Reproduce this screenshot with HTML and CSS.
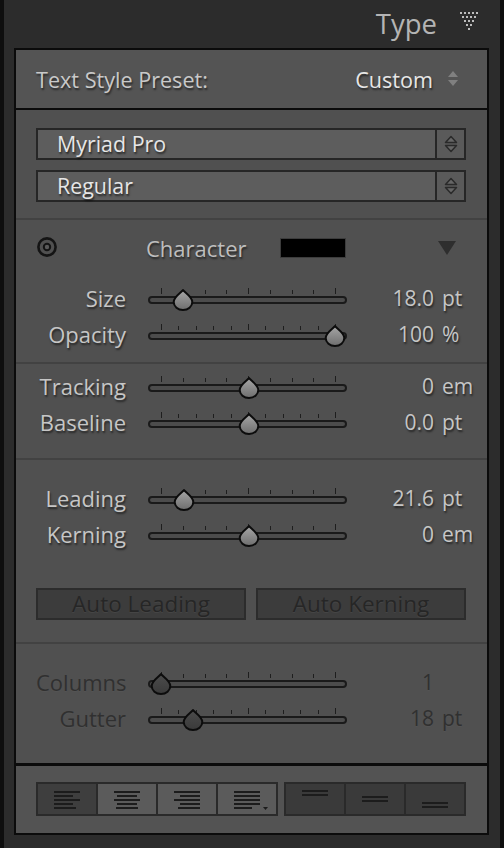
FILE: index.html
```html
<!DOCTYPE html>
<html lang="en">
<head>
    <meta charset="UTF-8">
    <title>Type</title>
    <link rel="stylesheet" href="styles.css">
</head>
<body>
    <svg width="0" height="0" class="defs">
        <defs>
            <linearGradient id="thumbFill" x1="0" y1="0" x2="0" y2="1">
                <stop offset="0" stop-color="#a6a6a6"/>
                <stop offset="1" stop-color="#6e6e6e"/>
            </linearGradient>
            <linearGradient id="thumbOff" x1="0" y1="0" x2="0" y2="1">
                <stop offset="0" stop-color="#4c4c4c"/>
                <stop offset="1" stop-color="#3a3a3a"/>
            </linearGradient>
            <path id="drop" d="M11 1.2 C13 3.6 20.3 8 20.3 13 A9.3 8 0 0 1 1.7 13 C1.7 8 9 3.6 11 1.2 Z"/>
        </defs>
    </svg>

    <div class="frame">
        <div class="head">
            <span class="head-title">Type</span>
            <svg class="head-icon" width="18" height="19" viewBox="0 0 18 19">
                <g fill="#bdbdbd">
                    <rect x="0" y="0" width="2" height="2"/><rect x="4" y="0" width="2" height="2"/><rect x="8" y="0" width="2" height="2"/><rect x="12" y="0" width="2" height="2"/><rect x="16" y="0" width="2" height="2"/>
                    <rect x="2" y="4" width="2" height="2"/><rect x="6" y="4" width="2" height="2"/><rect x="10" y="4" width="2" height="2"/><rect x="14" y="4" width="2" height="2"/>
                    <rect x="4" y="8" width="2" height="2"/><rect x="8" y="8" width="2" height="2"/><rect x="12" y="8" width="2" height="2"/>
                    <rect x="6" y="12" width="2" height="2"/><rect x="10" y="12" width="2" height="2"/>
                    <rect x="8" y="16" width="2" height="2"/>
                </g>
            </svg>
        </div>

        <div class="panel">
            <div class="sec preset">
                <span class="preset-label">Text Style Preset:</span>
                <span class="preset-value">Custom</span>
                <svg class="updown" width="10" height="16" viewBox="0 0 10 16">
                    <path d="M5 0 L10 6 L0 6 Z M0 9 L10 9 L5 15 Z" fill="#808080"/>
                </svg>
            </div>

            <div class="sec fonts">
                <div class="select">
                    <span class="select-text">Myriad Pro</span>
                    <span class="select-btn">
                        <svg width="14" height="18" viewBox="0 0 14 18">
                            <path d="M7 1.5 L12.5 7.5 L1.5 7.5 Z M1.5 10.5 L12.5 10.5 L7 16.5 Z" fill="#666" stroke="#2a2a2a" stroke-width="1.5" stroke-linejoin="round"/>
                        </svg>
                    </span>
                </div>
                <div class="select">
                    <span class="select-text">Regular</span>
                    <span class="select-btn">
                        <svg width="14" height="18" viewBox="0 0 14 18">
                            <path d="M7 1.5 L12.5 7.5 L1.5 7.5 Z M1.5 10.5 L12.5 10.5 L7 16.5 Z" fill="#666" stroke="#2a2a2a" stroke-width="1.5" stroke-linejoin="round"/>
                        </svg>
                    </span>
                </div>
            </div>

            <div class="sec character">
                <div class="char-head">
                    <svg class="target" width="22" height="22" viewBox="0 0 22 22">
                        <circle cx="11" cy="11" r="8.6" fill="none" stroke="#141414" stroke-width="2.6"/>
                        <circle cx="11" cy="11" r="3.2" fill="#5a5a5a" stroke="#141414" stroke-width="2"/>
                    </svg>
                    <span class="char-title">Character</span>
                    <span class="swatch"></span>
                    <svg class="collapse" width="20" height="16" viewBox="0 0 20 16">
                        <path d="M1 1 L19 1 L10 15 Z" fill="#2e2e2e"/>
                    </svg>
                </div>

                <div class="row first">
                    <span class="label">Size</span>
                    <div class="slider">
                        <div class="ticks"><i class="major"></i><i></i><i></i><i></i><i class="major"></i><i></i><i></i><i></i><i class="major"></i></div>
                        <div class="track"></div>
                        <svg class="thumb" style="left: 24px" width="22" height="22" viewBox="0 0 22 22"><use href="#drop" fill="url(#thumbFill)" stroke="#0c0c0c" stroke-width="2"/></svg>
                    </div>
                    <span class="num">18.0</span><span class="unit">pt</span>
                </div>
                <div class="row">
                    <span class="label">Opacity</span>
                    <div class="slider">
                        <div class="ticks"><i class="major"></i><i></i><i></i><i></i><i></i><i class="major"></i><i></i><i></i><i></i><i></i><i class="major"></i></div>
                        <div class="track"></div>
                        <svg class="thumb" style="left: 176px" width="22" height="22" viewBox="0 0 22 22"><use href="#drop" fill="url(#thumbFill)" stroke="#0c0c0c" stroke-width="2"/></svg>
                    </div>
                    <span class="num">100</span><span class="unit">%</span>
                </div>
            </div>

            <div class="sec spacing">
                <div class="row">
                    <span class="label">Tracking</span>
                    <div class="slider">
                        <div class="ticks"><i class="major"></i><i></i><i></i><i></i><i class="major"></i><i></i><i></i><i></i><i class="major"></i></div>
                        <div class="track"></div>
                        <svg class="thumb" style="left: 90px" width="22" height="22" viewBox="0 0 22 22"><use href="#drop" fill="url(#thumbFill)" stroke="#0c0c0c" stroke-width="2"/></svg>
                    </div>
                    <span class="num">0</span><span class="unit">em</span>
                </div>
                <div class="row">
                    <span class="label">Baseline</span>
                    <div class="slider">
                        <div class="ticks"><i class="major"></i><i></i><i></i><i></i><i></i><i class="major"></i><i></i><i></i><i></i><i></i><i class="major"></i></div>
                        <div class="track"></div>
                        <svg class="thumb" style="left: 90px" width="22" height="22" viewBox="0 0 22 22"><use href="#drop" fill="url(#thumbFill)" stroke="#0c0c0c" stroke-width="2"/></svg>
                    </div>
                    <span class="num">0.0</span><span class="unit">pt</span>
                </div>
            </div>

            <div class="sec leading">
                <div class="row">
                    <span class="label">Leading</span>
                    <div class="slider">
                        <div class="ticks"><i class="major"></i><i></i><i></i><i></i><i class="major"></i><i></i><i></i><i></i><i class="major"></i></div>
                        <div class="track"></div>
                        <svg class="thumb" style="left: 25px" width="22" height="22" viewBox="0 0 22 22"><use href="#drop" fill="url(#thumbFill)" stroke="#0c0c0c" stroke-width="2"/></svg>
                    </div>
                    <span class="num">21.6</span><span class="unit">pt</span>
                </div>
                <div class="row">
                    <span class="label">Kerning</span>
                    <div class="slider">
                        <div class="ticks"><i class="major"></i><i></i><i></i><i></i><i class="major"></i><i></i><i></i><i></i><i class="major"></i></div>
                        <div class="track"></div>
                        <svg class="thumb" style="left: 90px" width="22" height="22" viewBox="0 0 22 22"><use href="#drop" fill="url(#thumbFill)" stroke="#0c0c0c" stroke-width="2"/></svg>
                    </div>
                    <span class="num">0</span><span class="unit">em</span>
                </div>
                <div class="auto-buttons">
                    <button class="auto">Auto Leading</button>
                    <button class="auto">Auto Kerning</button>
                </div>
            </div>

            <div class="sec columns off">
                <div class="row">
                    <span class="label">Columns</span>
                    <div class="slider">
                        <div class="ticks"><i class="major"></i><i></i><i></i><i></i><i class="major"></i><i></i><i></i><i></i><i class="major"></i></div>
                        <div class="track"></div>
                        <svg class="thumb" style="left: 2px" width="22" height="22" viewBox="0 0 22 22"><use href="#drop" fill="url(#thumbOff)" stroke="#0c0c0c" stroke-width="2"/></svg>
                    </div>
                    <span class="num">1</span><span class="unit"></span>
                </div>
                <div class="row">
                    <span class="label">Gutter</span>
                    <div class="slider">
                        <div class="ticks"><i class="major"></i><i></i><i></i><i></i><i></i><i class="major"></i><i></i><i></i><i></i><i></i><i class="major"></i></div>
                        <div class="track"></div>
                        <svg class="thumb" style="left: 34px" width="22" height="22" viewBox="0 0 22 22"><use href="#drop" fill="url(#thumbOff)" stroke="#0c0c0c" stroke-width="2"/></svg>
                    </div>
                    <span class="num">18</span><span class="unit">pt</span>
                </div>
            </div>

            <div class="toolbar">
                <div class="seg">
                    <span class="seg-btn on">
                        <svg width="58" height="30" viewBox="0 0 58 30"><g fill="#1c1c1c"><rect x="16" y="7" width="26" height="2"/><rect x="16" y="11" width="19" height="2"/><rect x="16" y="15" width="26" height="2"/><rect x="16" y="19" width="19" height="2"/><rect x="16" y="23" width="22" height="2"/></g></svg>
                    </span>
                    <span class="seg-btn">
                        <svg width="58" height="30" viewBox="0 0 58 30"><g fill="#1c1c1c"><rect x="16" y="7" width="26" height="2"/><rect x="19" y="11" width="20" height="2"/><rect x="16" y="15" width="26" height="2"/><rect x="19" y="19" width="20" height="2"/><rect x="18" y="23" width="22" height="2"/></g></svg>
                    </span>
                    <span class="seg-btn">
                        <svg width="58" height="30" viewBox="0 0 58 30"><g fill="#1c1c1c"><rect x="16" y="7" width="26" height="2"/><rect x="22" y="11" width="20" height="2"/><rect x="16" y="15" width="26" height="2"/><rect x="22" y="19" width="20" height="2"/><rect x="20" y="23" width="22" height="2"/></g></svg>
                    </span>
                    <span class="seg-btn">
                        <svg width="58" height="30" viewBox="0 0 58 30"><g fill="#1c1c1c"><rect x="16" y="7" width="26" height="2"/><rect x="16" y="11" width="26" height="2"/><rect x="16" y="15" width="26" height="2"/><rect x="16" y="19" width="26" height="2"/><rect x="16" y="23" width="18" height="2"/><path d="M45 23 L50 23 L47.5 26 Z"/></g></svg>
                    </span>
                </div>
                <div class="seg dark">
                    <span class="seg-btn">
                        <svg width="58" height="30" viewBox="0 0 58 30"><g fill="#1c1c1c"><rect x="16" y="6" width="26" height="2"/><rect x="16" y="10" width="26" height="2"/></g></svg>
                    </span>
                    <span class="seg-btn">
                        <svg width="58" height="30" viewBox="0 0 58 30"><g fill="#1c1c1c"><rect x="16" y="12" width="26" height="2"/><rect x="16" y="16" width="26" height="2"/></g></svg>
                    </span>
                    <span class="seg-btn">
                        <svg width="58" height="30" viewBox="0 0 58 30"><g fill="#1c1c1c"><rect x="16" y="18" width="26" height="2"/><rect x="16" y="22" width="26" height="2"/></g></svg>
                    </span>
                </div>
            </div>
        </div>
    </div>
</body>
</html>
```

FILE: styles.css
```css
body {
    margin: 0;
    background: #2c2c2c;
    font-family: "Open Sans", "Noto Sans", sans-serif;
    color: #c6c6c6;
}
.defs {
    position: absolute;
}
.frame {
    box-sizing: border-box;
    width: 504px;
    height: 848px;
    border-left: 4px solid #0e0e0e;
    border-right: 4px solid #0e0e0e;
    padding: 0 11px 0 10px;
    background: #2c2c2c;
}

/* header */
.head {
    height: 48px;
    display: flex;
    justify-content: flex-end;
    align-items: center;
    padding-right: 11px;
}
.head-title {
    font-size: 27.5px;
    color: #b4b4b4;
    margin-right: 23px;
    line-height: 48px;
}
.head-icon {
    margin-top: -6px;
}

/* panel */
.panel {
    border: 2px solid #0b0b0b;
    background: #505050;
}
.sec {
    padding: 0 21px 0 20px;
    border-bottom: 2px solid #424242;
}
.preset {
    height: 58px;
    display: flex;
    align-items: center;
    background: #545454;
    border-bottom: 2px solid #0b0b0b;
}
.preset-label {
    font-size: 21.6px;
    color: #c9c9c9;
    text-shadow: 1px 2px 2px rgba(0, 0, 0, 0.55);
}
.preset-value {
    margin-left: auto;
    font-size: 21.6px;
    color: #e6e6e6;
    text-shadow: 1px 2px 2px rgba(0, 0, 0, 0.55);
}
.updown {
    margin: 0 8px 0 15px;
}

/* font selects */
.fonts {
    padding-top: 18px;
    padding-bottom: 16px;
    display: flex;
    flex-direction: column;
    gap: 10px;
}
.select {
    box-sizing: border-box;
    height: 32px;
    display: flex;
    border: 2px solid #262626;
    background: #5d5d5d;
}
.select-text {
    flex: 1;
    padding-left: 19px;
    font-size: 21.4px;
    line-height: 28px;
    color: #e6e6e6;
    text-shadow: 1px 2px 2px rgba(0, 0, 0, 0.6);
}
.select-btn {
    width: 27px;
    border-left: 2px solid #262626;
    background: #5a5a5a;
    display: flex;
    align-items: center;
    justify-content: center;
}

/* character */
.character {
    padding-top: 10px;
    padding-bottom: 10px;
}
.char-head {
    height: 36px;
    display: flex;
    align-items: center;
}
.target {
    margin-top: -2px;
}
.char-title {
    margin-left: 88px;
    width: 134px;
    font-size: 22px;
    color: #bebebe;
    text-shadow: 1px 2px 2px rgba(0, 0, 0, 0.55);
}
.swatch {
    box-sizing: border-box;
    width: 66px;
    height: 20px;
    background: #000;
    border: 1px solid #3c3c3c;
}
.collapse {
    margin-left: auto;
    margin-right: 9px;
}

/* slider rows */
.row {
    height: 36px;
    display: flex;
    align-items: center;
}
.row.first {
    margin-top: 14px;
}
.label {
    width: 90px;
    flex: none;
    text-align: right;
    white-space: nowrap;
    font-size: 22px;
    color: #c6c6c6;
    text-shadow: 1px 2px 2px rgba(0, 0, 0, 0.55);
}
.slider {
    position: relative;
    width: 199px;
    height: 36px;
    margin-left: 22px;
    flex: none;
}
.ticks {
    display: flex;
    justify-content: space-between;
    align-items: flex-end;
    height: 6px;
    padding: 0 11px 0 13px;
    margin-top: 8px;
}
.ticks i {
    width: 1px;
    height: 4px;
    background: #1e1e1e;
}
.ticks i.major {
    height: 6px;
}
.track {
    box-sizing: border-box;
    height: 8px;
    margin-top: 2px;
    border: 2px solid #1a1a1a;
    border-radius: 4px;
    background: #4c4c4c;
}
.thumb {
    position: absolute;
    top: 9px;
}
.num {
    width: 87px;
    flex: none;
    text-align: right;
    font-size: 21px;
    color: #c6c6c6;
    text-shadow: 1px 2px 2px rgba(0, 0, 0, 0.55);
}
.unit {
    margin-left: 8px;
    font-size: 21px;
    color: #c6c6c6;
    text-shadow: 1px 2px 2px rgba(0, 0, 0, 0.55);
}

.spacing {
    padding-top: 4px;
    padding-bottom: 18px;
}
.leading {
    padding-top: 20px;
    padding-bottom: 22px;
}
.auto-buttons {
    display: flex;
    gap: 10px;
    margin-top: 36px;
}
.auto {
    flex: 1;
    height: 32px;
    padding: 0;
    border: 2px solid #2c2c2c;
    background: #3c3c3c;
    font-family: inherit;
    font-size: 22.5px;
    line-height: 26px;
    color: #262626;
    text-shadow: 0 1px 1px rgba(255, 255, 255, 0.06);
}

.columns {
    padding-top: 20px;
    padding-bottom: 27px;
    border-bottom: none;
}
.off .label,
.off .num,
.off .unit {
    color: #303030;
    text-shadow: 0 1px 1px rgba(255, 255, 255, 0.03);
}

/* bottom toolbar */
.toolbar {
    height: 51px;
    border-top: 3px solid #0b0b0b;
    background: #535353;
    display: flex;
    align-items: flex-start;
    gap: 6px;
    padding: 16px 21px 0 20px;
}
.seg {
    display: flex;
    gap: 2px;
    border: 2px solid #2a2a2a;
    background: #2a2a2a;
}
.seg-btn {
    width: 58px;
    height: 30px;
    background: #5b5b5b;
    display: flex;
    align-items: center;
    justify-content: center;
}
.seg-btn.on {
    background: #3e3e3e;
}
.seg.dark .seg-btn {
    background: #3a3a3a;
}
```
